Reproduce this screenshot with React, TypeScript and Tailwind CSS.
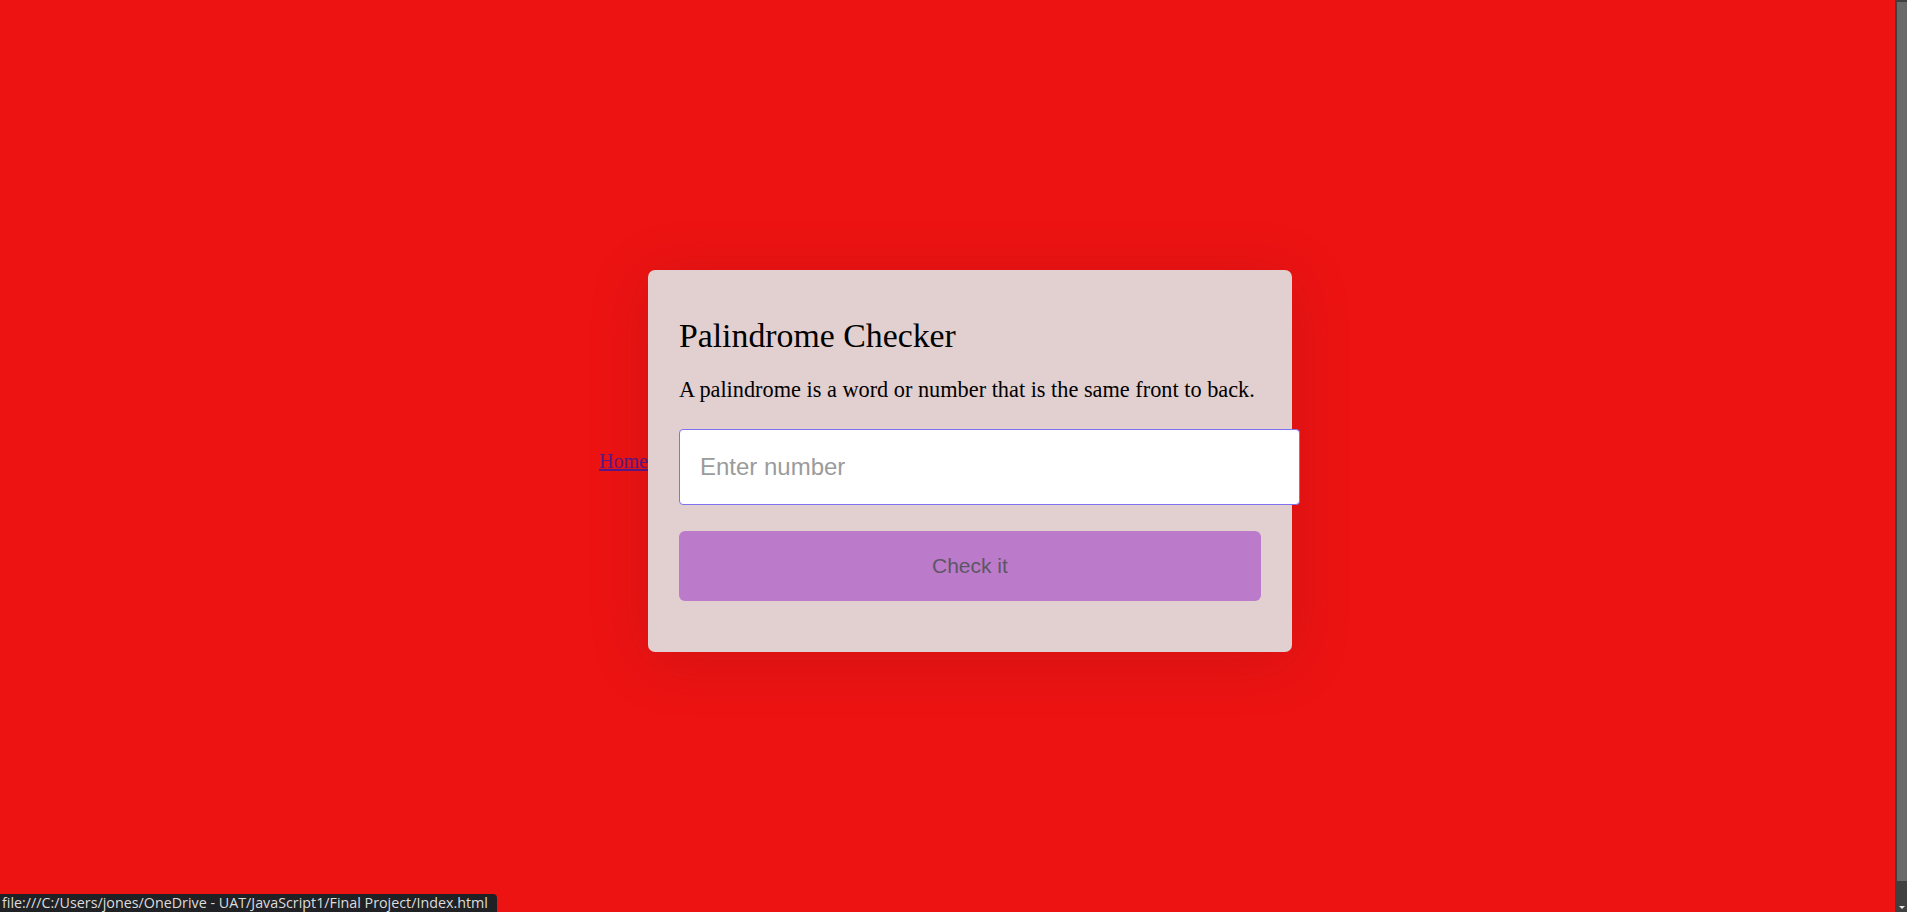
export default function App() {
  return (
    <div className="relative flex h-[912px] w-full overflow-hidden bg-[#ed1313] font-['Liberation_Serif',serif]">
      <main className="flex flex-1 items-center justify-center pt-[10px] pr-[4px]">
        <a
          href="#"
          className="text-[20px] leading-[23px] text-[#551a8b] underline"
        >
          Home
        </a>
        <div className="w-[644px] rounded-[7px] bg-[#e2cfcf] px-[31px] pt-[47px] pb-[51px] shadow-[0_8px_60px_rgba(90,20,20,0.18)]">
          <h2 className="text-[33.8px] leading-[38px] text-black">
            Palindrome Checker
          </h2>
          <p className="mt-[23px] whitespace-nowrap text-[22.3px] leading-[24px] text-black">
            A palindrome is a word or number that is the same front to back.
          </p>
          <input
            type="text"
            placeholder="Enter number"
            className="mt-[27px] block h-[76px] w-[621px] rounded-[4px] border border-[#7f72ee] bg-white px-[20px] font-['Liberation_Sans',Arial,sans-serif] text-[24px] text-black outline-none placeholder:text-[#9b9b9b]"
          />
          <button className="mt-[26px] block h-[70px] w-full rounded-[6px] bg-[#bb7bca] font-['Liberation_Sans',Arial,sans-serif] text-[21px] text-[#5d5666]">
            Check it
          </button>
        </div>
      </main>

      {/* scrollbar */}
      <div className="flex w-[12px] flex-col bg-[#404040] pt-[2px] pl-[2px]">
        <div className="h-[879px] bg-[#6a6a6a]" />
        <div className="flex flex-1 items-end justify-center pb-[3px]">
          <svg width="6" height="3" viewBox="0 0 6 3">
            <path d="M0 0 H6 L3 3 Z" fill="#e5e5e5" />
          </svg>
        </div>
      </div>

      {/* status bubble */}
      <div className="absolute bottom-0 left-0 flex h-[18px] w-[497px] items-center rounded-tr-[4px] bg-[#202124] pl-[2px] font-['Open_Sans',sans-serif] text-[14.3px] text-[#dcdcdc]">
        file:///C:/Users/jones/OneDrive - UAT/JavaScript1/Final Project/Index.html
      </div>
    </div>
  );
}
